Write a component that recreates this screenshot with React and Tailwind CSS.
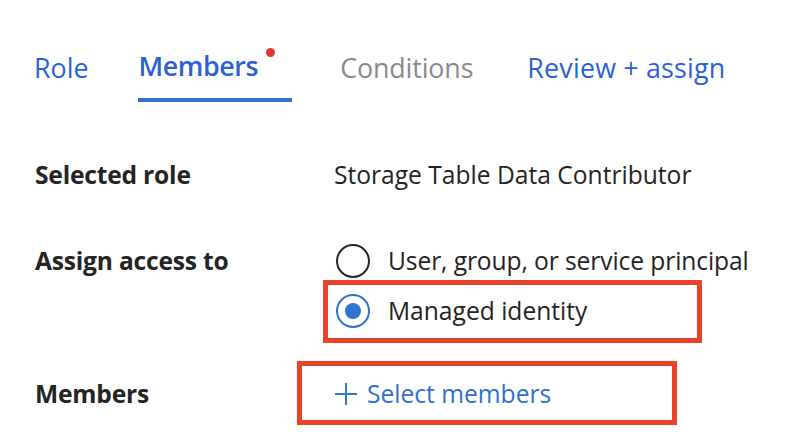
export default function App() {
  return (
    <div className="w-[810px] h-[434px] bg-white overflow-hidden" style={{ fontFamily: '"Open Sans", "Noto Sans", sans-serif' }}>
      <div className="flex items-end h-[102px] pl-[34px] text-[26.8px]">
        <div className="flex flex-col mr-[50px]">
          <span className="text-[#2a62d6] leading-[36px] pb-[16px]">Role</span>
        </div>
        <div className="flex flex-col mr-[48px]">
          <div className="relative pl-0 pr-[34px]">
            <span className="text-[#2a62d6] font-semibold leading-[36px] tracking-[-0.4px]">Members</span>
            <span className="absolute right-[17px] top-[2px] w-[9px] h-[9px] rounded-full bg-[#e8342a]"></span>
          </div>
          <div className="mt-[12px] h-[4px] bg-[#2f74d0]"></div>
        </div>
        <div className="flex flex-col mr-[54px]">
          <span className="text-[#8a8a8a] leading-[36px] pb-[16px] tracking-[-0.1px]">Conditions</span>
        </div>
        <div className="flex flex-col">
          <span className="text-[#2a62d6] leading-[36px] pb-[16px] tracking-[0.2px]">Review + assign</span>
        </div>
      </div>

      <div className="grid grid-cols-[299px_1fr] pl-[35px] text-[24.6px] text-[#242424]">
        <div className="font-bold h-[40px] flex items-center mt-[53px] tracking-[-0.2px]">Selected role</div>
        <div className="h-[40px] flex items-center mt-[53px]">Storage Table Data Contributor</div>

        <div className="font-bold h-[40px] flex items-center mt-[46px] tracking-[-0.2px]">Assign access to</div>
        <div className="flex flex-col mt-[46px]">
          <div className="h-[40px] flex items-center">
            <span className="ml-[2px] w-[34px] h-[34px] rounded-full border-2 border-[#242424] mr-[18px]"></span>
            <span className="tracking-[-0.1px]">User, group, or service principal</span>
          </div>
          <div className="relative h-[40px] flex items-center mt-[10px]">
            <span className="ml-[2px] w-[34px] h-[34px] rounded-full border-2 border-[#2f74d0] mr-[18px] flex items-center justify-center">
              <span className="w-[16px] h-[16px] rounded-full bg-[#2f74d0]"></span>
            </span>
            <span>Managed identity</span>
            <span className="absolute left-[-11px] top-[-11px] w-[379px] h-[63px] border-[5px] border-[#e8442a]"></span>
          </div>
        </div>

        <div className="font-bold h-[40px] flex items-center mt-[43px] tracking-[-0.2px]">Members</div>
        <div className="relative h-[40px] flex items-center mt-[43px] text-[#2f6fd0]">
          <svg width="24" height="24" viewBox="0 0 24 24" className="mr-[9px]">
            <path d="M12 1v22M1 12h22" stroke="#3a78d4" strokeWidth="2" fill="none" />
          </svg>
          <span>Select members</span>
          <span className="absolute left-[-37px] top-[-13px] w-[380px] h-[64px] border-[5px] border-[#e8442a]"></span>
        </div>
      </div>
    </div>
  );
}
